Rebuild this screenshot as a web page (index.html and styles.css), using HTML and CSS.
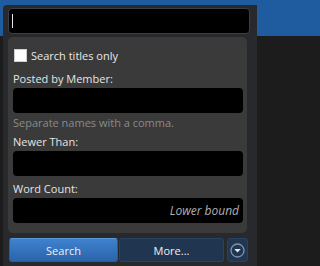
FILE: index.html
```html
<!DOCTYPE html>
<html>
<head>
<meta charset="utf-8">
<link rel="stylesheet" href="styles.css">
</head>
<body>
<div class="header"></div>
<div class="popup">
  <div class="search-box"><span class="caret"></span></div>
  <div class="panel">
    <label class="check-row"><span class="checkbox"></span><span class="check-label">Search titles only</span></label>
    <div class="label first">Posted by Member:</div>
    <div class="field"></div>
    <div class="hint">Separate names with a comma.</div>
    <div class="label newer">Newer Than:</div>
    <div class="field"></div>
    <div class="label word">Word Count:</div>
    <div class="field placeholder">Lower bound</div>
  </div>
  <div class="buttons">
    <div class="btn btn-search">Search</div>
    <div class="btn btn-more">More...</div>
    <div class="btn btn-toggle">
      <svg width="15" height="15" viewBox="0 0 15 15"><circle cx="7.5" cy="7.5" r="6.5" fill="none" stroke="#8293a8" stroke-width="1.3"/><path d="M4.3 6 L10.7 6 L7.5 9.4 Z" fill="#e4e8ee"/></svg>
    </div>
  </div>
</div>
</body>
</html>
```
FILE: styles.css
```css
html, body {
  margin: 0;
  padding: 0;
  overflow: hidden;
}
body {
  height: 266px;
  background: #1c1c1d;
  font-family: "Open Sans", "Noto Sans", sans-serif;
  font-size: 11px;
  position: relative;
}
.header {
  height: 36px;
  background: #1f5c9f;
}
.popup {
  position: absolute;
  left: 3px;
  top: 5px;
  width: 244px;
  height: 270px;
  padding: 3px 5px 0 5px;
  background: #28292c;
  border-radius: 4px 0 0 0;
}
.search-box {
  height: 24px;
  background: #000;
  border: 1px solid #3b3f45;
  border-radius: 4px;
  display: flex;
  align-items: center;
  padding-left: 3px;
  width: 237px;
}
.caret {
  width: 1px;
  height: 14px;
  background: #e8e8e8;
}
.panel {
  margin-top: 3px;
  width: 230px;
  background: #3a3a3a;
  border-radius: 5px;
  padding: 10px 4px 10px 5px;
  color: #e2e2e2;
}
.check-row {
  display: flex;
  align-items: center;
  height: 16px;
  gap: 4px;
  padding-left: 1px;
}
.checkbox {
  width: 13px;
  height: 13px;
  background: #fff;
  border: 1px solid #cfcfcf;
  box-sizing: border-box;
}
.check-label {
  color: #e8e8e8;
  font-size: 11px;
}
.label {
  line-height: 15px;
  color: #e4e4e4;
  margin-bottom: 2px;
}
.label.first { margin-top: 8px; }
.label.newer { margin-top: 4px; }
.label.word { margin-top: 5px; }
.field {
  height: 25px;
  background: #000;
  border-radius: 4px;
  box-sizing: border-box;
}
.hint {
  line-height: 15px;
  margin-top: 2px;
  color: #8a8a8a;
}
.placeholder {
  color: #b0b0b0;
  font-style: italic;
  font-size: 12px;
  text-align: right;
  line-height: 25px;
  padding-right: 4px;
}
.buttons {
  display: flex;
  margin-top: 5px;
  margin-left: 1px;
  height: 24px;
}
.btn {
  height: 24px;
  box-sizing: border-box;
  display: flex;
  align-items: center;
  justify-content: center;
  color: #f0f0f0;
  font-size: 11px;
  border-radius: 3px;
}
.btn-search {
  width: 109px;
  background: linear-gradient(#3f82cf, #2b64aa);
  border: 1px solid #2a5c98;
  border-top-color: #5a98dc;
}
.btn-more {
  width: 105px;
  margin-left: 1px;
  background: #203550;
  border: 1px solid #2a4262;
}
.btn-toggle {
  width: 21px;
  margin-left: 3px;
  background: #213651;
  border: 1px solid #2a4262;
}
```
